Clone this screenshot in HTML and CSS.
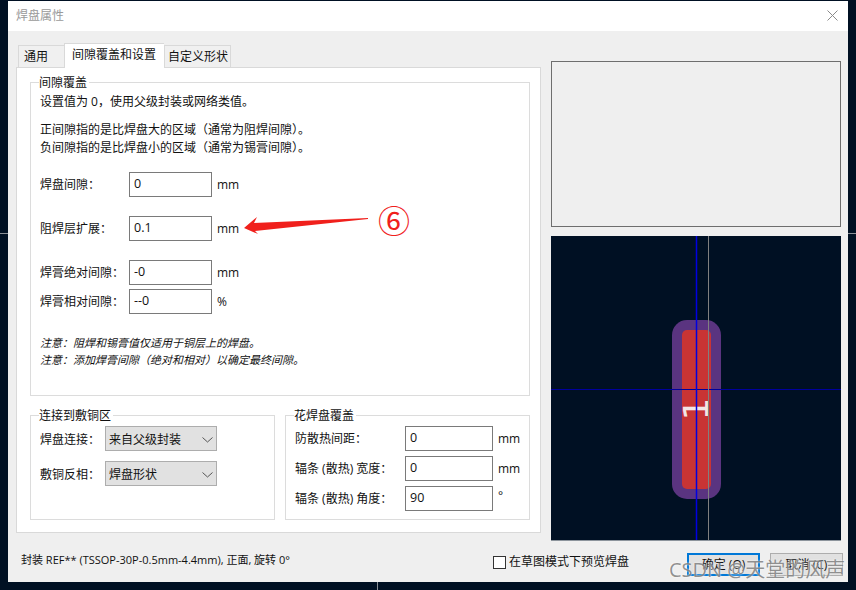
FILE: index.html
```html
<!DOCTYPE html>
<html lang="zh-CN">
<head>
  <meta charset="UTF-8" />
  <title>焊盘属性</title>
  <link rel="stylesheet" href="styles.css">
</head>
<body>

  <div class="dialog">
    <div class="titlebar">
      <span>焊盘属性</span>
      <svg class="close" width="11" height="11" viewBox="0 0 11 11"><path d="M0.5 0.5L10.5 10.5M10.5 0.5L0.5 10.5" stroke="#8a8a8a" fill="none"/></svg>
    </div>

    <div class="main">
      <div class="left">
        <div class="tabs">
          <div class="tab tab-first">通用</div>
          <div class="tab active">间隙覆盖和设置</div>
          <div class="tab tab-last">自定义形状</div>
        </div>

        <div class="panel">
          <fieldset class="group group-top">
            <legend>间隙覆盖</legend>
            <p class="line line-first">设置值为 0，使用父级封装或网络类值。</p>
            <p class="line gap-para">正间隙指的是比焊盘大的区域（通常为阻焊间隙）。</p>
            <p class="line">负间隙指的是比焊盘小的区域（通常为锡膏间隙）。</p>

            <div class="row row-first"><label>焊盘间隙：</label><div class="field">0</div><span class="unit">mm</span></div>
            <div class="row row-wide"><label>阻焊层扩展：</label><div class="field">0.1</div><span class="unit">mm</span></div>
            <div class="row row-wide"><label>焊膏绝对间隙：</label><div class="field">-0</div><span class="unit">mm</span></div>
            <div class="row row-tight"><label>焊膏相对间隙：</label><div class="field">--0</div><span class="unit">%</span></div>

            <p class="line note note-first">注意：阻焊和锡膏值仅适用于铜层上的焊盘。</p>
            <p class="line note">注意：添加焊膏间隙（绝对和相对）以确定最终间隙。</p>
          </fieldset>

          <div class="groups-bottom">
            <fieldset class="group group-half">
              <legend>连接到敷铜区</legend>
              <div class="row row-select">
                <label class="label-short">焊盘连接：</label>
                <div class="select">来自父级封装
                  <svg width="11" height="6" viewBox="0 0 11 6"><path d="M0.5 0.5L5.5 5L10.5 0.5" stroke="#555" fill="none"/></svg>
                </div>
              </div>
              <div class="row row-select row-select-next">
                <label class="label-short">敷铜反相：</label>
                <div class="select">焊盘形状
                  <svg width="11" height="6" viewBox="0 0 11 6"><path d="M0.5 0.5L5.5 5L10.5 0.5" stroke="#555" fill="none"/></svg>
                </div>
              </div>
            </fieldset>

            <fieldset class="group group-half">
              <legend>花焊盘覆盖</legend>
              <div class="row row-select"><label class="label-long">防散热间距：</label><div class="field field-long">0</div><span class="unit">mm</span></div>
              <div class="row row-spoke"><label class="label-long">辐条 (散热) 宽度：</label><div class="field field-long">0</div><span class="unit">mm</span></div>
              <div class="row row-spoke"><label class="label-long">辐条 (散热) 角度：</label><div class="field field-long">90</div><span class="unit unit-deg">°</span></div>
            </fieldset>
          </div>
        </div>
      </div>

      <div class="right">
        <div class="preview-empty"></div>
        <svg class="preview" width="290" height="305" viewBox="0 0 290 305">
          <rect width="290" height="305" fill="#001023"/>
          <rect x="121" y="84" width="49" height="179" rx="15" fill="#5a3480"/>
          <rect x="131" y="94" width="29" height="159" rx="5" fill="#c83434"/>
          <text class="pad-num" transform="translate(157 173) rotate(-90) scale(1 .95)" text-anchor="middle" x="0" y="0">1</text>
          <line x1="0" y1="153.5" x2="290" y2="153.5" stroke="#00009c"/>
          <line x1="145.5" y1="0" x2="145.5" y2="304" stroke="#0000e0" stroke-width="1.5"/>
          <line x1="157.5" y1="0" x2="157.5" y2="304" stroke="#808080"/>
          <line x1="0" y1="304.5" x2="290" y2="304.5" stroke="#8c949c"/>
        </svg>
      </div>
    </div>

    <div class="footer">
      <span class="status">封装 REF** (TSSOP-30P-0.5mm-4.4mm), 正面, 旋转 0°</span>
      <div class="check"><span class="box"></span>在草图模式下预览焊盘</div>
      <div class="btn btn-ok">确定 (O)</div>
      <div class="btn">取消 (C)</div>
    </div>
  </div>

  <!-- annotation drawn on top of the screenshot -->
  <svg class="arrow" width="130" height="24" viewBox="0 0 130 24"><polygon points="0,12 13,1 10,7 124,2 124,3 11,15 14,18" fill="#f0201c"/></svg>
  <span class="circled">⑥</span>
  <span class="watermark">CSDN @天堂的风声</span>

  <i class="tick tick-left"></i>
  <i class="tick tick-right"></i>
  <i class="tick tick-bottom"></i>

</body>
</html>
```

FILE: styles.css
```css
* {
  box-sizing: border-box;
}

body {
  margin: 0;
  width: 856px;
  height: 590px;
  overflow: hidden;
  position: relative;
  padding: 1px 8px 8px;
  background-color: #001023;
  background-image: radial-gradient(circle at 1px 1px, #8a93a0 0.8px, transparent 1px);
  background-size: 32px 32px;
  background-position: 25px 1px;
  font-family: "Open Sans", "Noto Sans CJK SC", sans-serif;
  font-size: 12px;
  line-height: 18px;
  color: #111;
}

.dialog {
  width: 840px;
  height: 581px;
  background: #efefef;
  display: flex;
  flex-direction: column;
  position: relative;
}

.titlebar {
  height: 30px;
  flex: none;
  background: #fff;
  color: #9a9a9a;
  padding: 6px 10px 0 8px;
  display: flex;
  justify-content: space-between;
}

.close {
  margin-top: 3px;
}

.main {
  height: 510px;
  flex: none;
  display: flex;
}

.left {
  width: 525px;
  margin-left: 8px;
  padding-top: 12px;
}

.tabs {
  display: flex;
  align-items: flex-end;
  height: 24px;
  padding-left: 2px;
  position: relative;
  z-index: 1;
}

.tab {
  height: 22px;
  padding: 2px 3px 0;
  background: #f0f0f0;
  border: 1px solid #d9d9d9;
  border-bottom: none;
  white-space: nowrap;
}

.tab-first {
  width: 46px;
  padding-left: 5px;
  border-right: none;
}

.tab.active {
  height: 25px;
  width: 100px;
  margin-bottom: -1px;
  padding: 2px 7px 0;
  background: #fff;
  border-right: none;
}

.tab-last {
  width: 67px;
  padding-left: 3px;
}

.panel {
  height: 466px;
  background: #fff;
  border: 1px solid #d9d9d9;
  padding: 6px 10px 0 13px;
}

.group {
  margin: 0;
  padding: 0 0 0 9px;
  border: 1px solid #dcdcdc;
  min-width: 0;
}

.group legend {
  padding: 0 2px 0 0;
  margin-left: -1px;
  height: 17px;
  line-height: 17px;
}

.group-top {
  height: 322px;
}

.line {
  margin: 0;
  height: 18px;
}

.line-first {
  margin-top: 2px;
}

.gap-para {
  margin-top: 10px;
}

.row {
  display: flex;
  align-items: center;
  height: 25px;
}

.row label {
  width: 89px;
  flex: none;
}

.row-first {
  margin-top: 15px;
}

.row-wide {
  margin-top: 19px;
}

.row-tight {
  margin-top: 4px;
}

.field {
  width: 83px;
  height: 25px;
  border: 1.5px solid #7a7a7a;
  background: #fff;
  padding: 2px 0 0 4px;
  font-size: 12.5px;
}

.unit {
  margin-left: 5px;
}

.unit-deg {
  margin-top: -6px;
}

.note {
  font-style: italic;
  font-size: 11px;
  height: 17px;
  line-height: 17px;
}

.note-first {
  margin-top: 20px;
}

.groups-bottom {
  display: flex;
  gap: 10px;
  margin-top: 11px;
}

.group-half {
  width: 245px;
  height: 113px;
}

.row-select {
  margin-top: 2px;
}

.row-select-next {
  margin-top: 10px;
}

.row-spoke {
  margin-top: 5px;
}

.label-short {
  width: 65px !important;
  padding-top: 3px;
}

.label-long {
  width: 110px !important;
}

.field-long {
  width: 88px;
}

.select {
  width: 112px;
  height: 25px;
  background: #e1e1e1;
  border: 1.5px solid #adadad;
  padding: 2px 3px 0 3px;
  display: flex;
  justify-content: space-between;
  align-items: center;
}

.right {
  width: 290px;
  margin-left: 10px;
  padding-top: 30px;
}

.preview-empty {
  height: 166px;
  border: 1.5px solid #6e6e6e;
  margin-bottom: 9px;
}

.preview {
  display: block;
}

.pad-num {
  font-family: "DejaVu Sans", sans-serif;
  font-size: 36px;
  fill: #f2e6e6;
}

.footer {
  flex: 1;
  display: flex;
  align-items: flex-start;
  padding: 12px 5px 0 13px;
}

.status {
  margin-top: -2px;
  font-size: 11px;
}

.check {
  margin-left: auto;
  margin-right: 58px;
  display: flex;
  align-items: center;
}

.box {
  width: 13px;
  height: 13px;
  border: 1px solid #333;
  background: #fff;
  margin-right: 3px;
}

.btn {
  width: 73px;
  height: 23px;
  background: #e1e1e1;
  border: 1px solid #adadad;
  text-align: center;
  line-height: 21px;
  margin-left: 10px;
}

.btn-ok {
  margin-left: 0;
  border: 2px solid #0078d7;
  line-height: 19px;
}

.arrow {
  position: absolute;
  left: 244px;
  top: 216px;
}

.circled {
  position: absolute;
  left: 378px;
  top: 199px;
  font-family: "Noto Sans CJK SC", sans-serif;
  font-size: 32px;
  line-height: 40px;
  color: #f0201c;
}

.watermark {
  position: absolute;
  left: 669px;
  top: 556px;
  font-size: 20px;
  line-height: 28px;
  white-space: nowrap;
  color: rgba(110, 110, 110, 0.75);
  text-shadow: 0 0 2px #fff;
}

.tick {
  position: absolute;
  background: #8a8f96;
}

.tick-left {
  left: 0;
  top: 233px;
  width: 8px;
  height: 1px;
}

.tick-right {
  left: 848px;
  top: 233px;
  width: 8px;
  height: 1px;
}

.tick-bottom {
  left: 377px;
  top: 582px;
  width: 1px;
  height: 8px;
}
```
